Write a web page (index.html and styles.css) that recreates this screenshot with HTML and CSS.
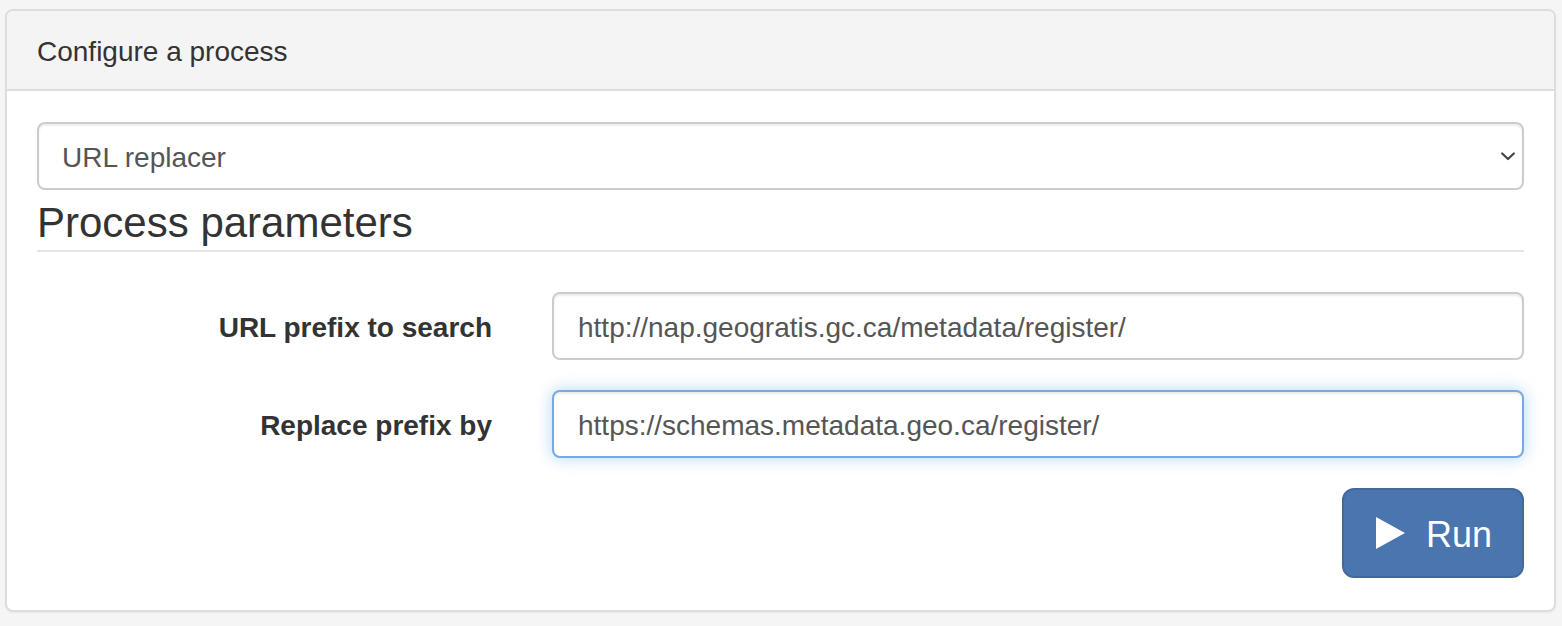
FILE: index.html
```html
<!DOCTYPE html>
<html lang="en">
<head>
<meta charset="utf-8">
<title>Configure a process</title>
<link rel="stylesheet" href="styles.css">
</head>
<body>
<div class="page">
  <section class="panel">
    <div class="panel-heading">Configure a process</div>
    <div class="panel-body">
      <div class="select-wrap">
        <select class="form-control select">
          <option>URL replacer</option>
        </select>
        <svg class="chevron" width="14" height="9" viewBox="0 0 14 9" aria-hidden="true"><path d="M1.2 1.5 L7 7 L12.8 1.5" fill="none" stroke="#444" stroke-width="2.2" stroke-linecap="round" stroke-linejoin="round"/></svg>
      </div>
      <form class="form-horizontal">
        <fieldset>
          <legend>Process parameters</legend>
          <div class="form-group">
            <label class="control-label" for="f1">URL prefix to search</label>
            <input id="f1" class="form-control" type="text" value="http://nap.geogratis.gc.ca/metadata/register/">
          </div>
          <div class="form-group">
            <label class="control-label" for="f2">Replace prefix by</label>
            <input id="f2" class="form-control focused" type="text" value="https://schemas.metadata.geo.ca/register/">
          </div>
          <div class="form-group actions">
            <button type="button" class="btn-run">
              <svg class="play" width="29" height="32" viewBox="0 0 29 32" aria-hidden="true"><path d="M0 0 L29 16 L0 32 Z" fill="#fff"/></svg>
              <span class="btn-label">Run</span>
            </button>
          </div>
        </fieldset>
      </form>
    </div>
  </section>
</div>
</body>
</html>
```

FILE: styles.css
```css
* { box-sizing: border-box; }

html, body {
  margin: 0;
  padding: 0;
  background: #f5f5f5;
}

body {
  font-family: "Liberation Sans", Arial, Helvetica, sans-serif;
  font-size: 28px;
  color: #333;
}

.page {
  padding: 9px 6px 15px 5px;
}

.panel {
  background: #fff;
  border: 2px solid #dddddd;
  border-radius: 8px;
  box-shadow: 0 1px 2px rgba(0, 0, 0, 0.05);
  overflow: hidden;
}

.panel-heading {
  background: #f4f4f4;
  border-bottom: 2px solid #dddddd;
  padding: 22px 30px 18px;
  line-height: 38px;
  font-size: 28px;
  color: #333;
}

.panel-body {
  padding: 31px 30px 32px;
}

.form-control {
  display: block;
  width: 100%;
  height: 68px;
  padding: 3px 24px 0;
  font-family: inherit;
  font-size: 28px;
  color: #555;
  background: #fff;
  border: 2px solid #cccccc;
  border-radius: 8px;
  box-shadow: inset 0 2px 2px rgba(0, 0, 0, 0.075);
  outline: none;
}

.select-wrap {
  position: relative;
}

.select {
  -webkit-appearance: none;
  appearance: none;
  padding-left: 23px;
}

.chevron {
  position: absolute;
  right: 9px;
  top: 30px;
  pointer-events: none;
}

fieldset {
  border: 0;
  margin: 0;
  padding: 0;
  min-width: 0;
}

legend {
  display: block;
  width: 100%;
  padding: 5px 0 0;
  margin: 0 0 40px;
  font-size: 42px;
  line-height: 55px;
  color: #333;
  border-bottom: 2px solid #e5e5e5;
}

.form-group {
  display: grid;
  grid-template-columns: 455px 1fr;
  column-gap: 60px;
  align-items: center;
  margin-bottom: 30px;
}

.control-label {
  text-align: right;
  font-weight: bold;
  font-size: 28px;
  color: #333;
  padding-top: 4px;
}

.focused {
  border-color: #79a9e0;
  box-shadow: inset 0 2px 2px rgba(0, 0, 0, 0.075), 0 0 16px rgba(102, 175, 233, 0.5);
}

.actions {
  display: flex;
  justify-content: flex-end;
  margin-bottom: 0;
}

.btn-run {
  display: flex;
  align-items: center;
  gap: 21px;
  height: 90px;
  padding: 0 30px 0 32px;
  background: #4a75ae;
  border: 2px solid #43699c;
  border-radius: 12px;
  color: #fff;
  font-family: inherit;
  font-size: 36px;
  line-height: 1;
  cursor: pointer;
}

.btn-label {
  padding-top: 4px;
}

.play {
  display: block;
  flex: none;
}
```
